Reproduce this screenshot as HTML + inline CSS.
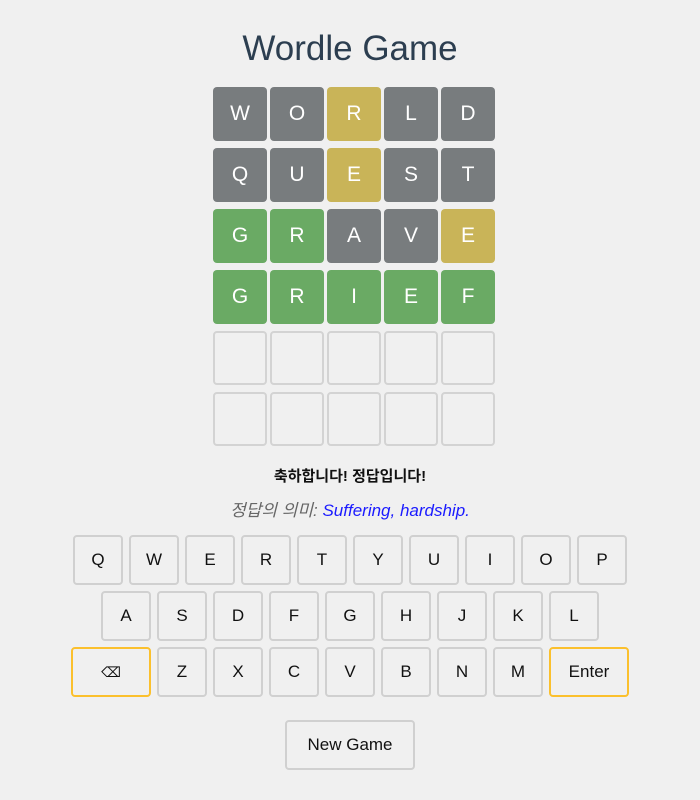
<!DOCTYPE html><html><head><meta charset="utf-8"><style>
body{margin:0;background:#f0f0f0;width:700px;height:800px;font-family:"Liberation Sans","Noto Sans CJK KR",sans-serif;position:relative;overflow:hidden}
h1{position:absolute;top:27px;left:0;width:700px;margin:0;text-align:center;font-weight:400;font-size:35px;color:#2c3e50;line-height:44px}
.t{position:absolute;width:54px;height:54px;border-radius:4px;color:#fff;font-size:21px;display:flex;align-items:center;justify-content:center;box-sizing:border-box}
.g{background:#787c7e}.y{background:#c9b458}.gr{background:#6aaa64}.e{border:2px solid #d3d3d3;background:#f0f0f0}
.k{position:absolute;width:50px;height:50px;box-sizing:border-box;border:2px solid #d0d0d0;border-radius:4px;display:flex;align-items:center;justify-content:center;font-size:17px;color:#111;background:#f0f0f0}
.w{width:80px;border-color:#fbc02d}
.msg{position:absolute;left:0;width:700px;text-align:center}
</style></head><body>
<h1>Wordle Game</h1>
<div id="b"></div>
<div class="msg" style="top:465px;font-weight:bold;font-size:15px;color:#111">축하합니다! 정답입니다!</div>
<div class="msg" style="top:496px;font-style:italic;font-size:17px;color:#666">정답의 의미: <span style="color:#1a1aff">Suffering, hardship.</span></div>
<div id="k"></div>
<div class="k" style="left:285px;top:720px;width:130px;font-size:17px">New Game</div>
<script>
var rows=[["WORLD","ggygg"],["QUEST","ggygg"],["GRAVE","rrggy"],["GRIEF","rrrrr"],["     ","eeeee"],["     ","eeeee"]];
var h="";rows.forEach(function(r,i){for(var j=0;j<5;j++){var c=r[1][j];var cl=c=="g"?"g":c=="y"?"y":c=="r"?"gr":"e";h+='<div class="t '+cl+'" style="left:'+(213+57*j)+'px;top:'+(87+61*i)+'px">'+r[0][j]+'</div>';}});
document.getElementById("b").innerHTML=h;
var k="";"QWERTYUIOP".split("").forEach(function(c,i){k+='<div class="k" style="left:'+(73+56*i)+'px;top:535px">'+c+'</div>'});
"ASDFGHJKL".split("").forEach(function(c,i){k+='<div class="k" style="left:'+(101+56*i)+'px;top:591px">'+c+'</div>'});
k+='<div class="k w" style="left:71px;top:647px;font-size:14px">⌫</div>';
"ZXCVBNM".split("").forEach(function(c,i){k+='<div class="k" style="left:'+(157+56*i)+'px;top:647px">'+c+'</div>'});
k+='<div class="k w" style="left:549px;top:647px">Enter</div>';
document.getElementById("k").innerHTML=k;
</script>
</body></html>
